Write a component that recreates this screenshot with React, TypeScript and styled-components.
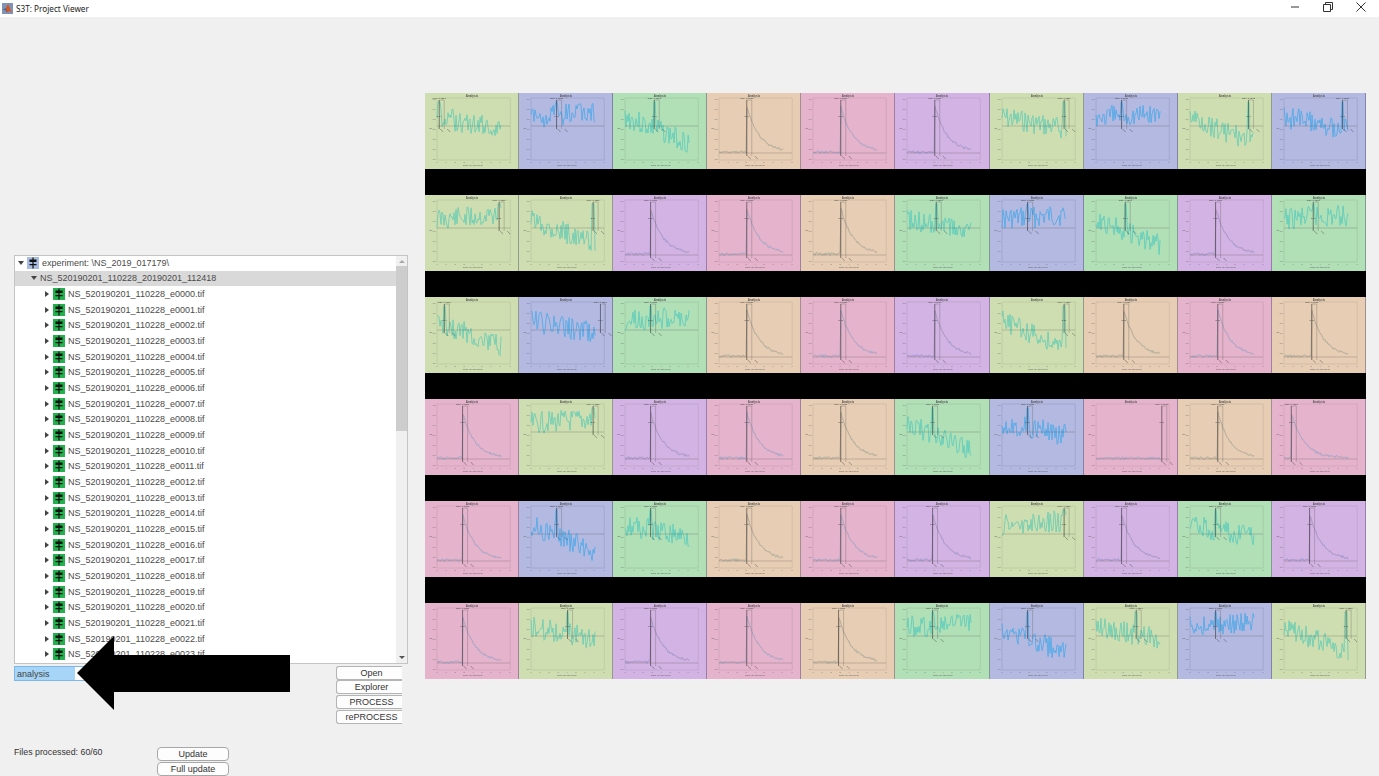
import React from 'react'
import styled, { createGlobalStyle } from 'styled-components'

const GlobalStyle = createGlobalStyle`
  html, body { margin: 0; padding: 0; height: 100%; overflow: hidden; }
  body { font-family: "Liberation Sans", Arial, sans-serif; background: #f0f0f0; }
  #root { height: 100%; }
`

const Window = styled.div`
  position: relative;
  width: 1379px;
  height: 776px;
  display: flex;
  flex-direction: column;
  overflow: hidden;
  background: #f0f0f0;
`
const TitleBar = styled.div`
  height: 17px;
  flex: none;
  background: #fff;
  display: flex;
  align-items: center;
  padding-left: 2px;
`
const TitleText = styled.span`
  margin-left: 3px;
  font: 8.2px "Noto Sans", sans-serif;
  color: #222;
`
const WindowControls = styled.div`
  margin-left: auto;
  display: flex;
  padding-right: 2px;
`
const WindowButton = styled.div`
  width: 33px;
  height: 17px;
  display: flex;
  align-items: center;
  justify-content: center;
  padding-bottom: 3px;
  box-sizing: border-box;
`
const Body = styled.div`
  flex: 1;
  display: flex;
  min-height: 0;
`
const LeftColumn = styled.div`
  width: 425px;
  flex: none;
  box-sizing: border-box;
  padding: 238px 0 0 14px;
  display: flex;
  flex-direction: column;
`
const TreePanel = styled.div`
  width: 394px;
  height: 409px;
  box-sizing: border-box;
  border: 1px solid #c4c4c4;
  background: #fff;
  display: flex;
  overflow: hidden;
`
const TreeRows = styled.div`
  flex: 1;
  min-width: 0;
  overflow: hidden;
  margin-top: -1px;
`
const TreeRow = styled.div<{ $depth: number; $selected?: boolean }>`
  height: 15.66px;
  display: flex;
  align-items: center;
  padding-left: ${p => 2 + p.$depth * 13}px;
  background: ${p => (p.$selected ? '#d9d9d9' : 'transparent')};
  font-size: 9px;
  color: #4a4a4a;
  white-space: nowrap;
`
const Caret = styled.span<{ $open?: boolean }>`
  width: 0;
  height: 0;
  flex: none;
  margin: ${p => (p.$open ? '0 3px 0 1px' : '0 4px 0 2px')};
  border-style: solid;
  ${p =>
    p.$open
      ? 'border-width: 4px 3.5px 0 3.5px; border-color: #444 transparent transparent transparent;'
      : 'border-width: 3.5px 0 3.5px 4px; border-color: transparent transparent transparent #444;'}
`
const RowLabel = styled.span<{ $flush?: boolean }>`
  margin-left: ${p => (p.$flush ? 0 : 3)}px;
`
const ScrollBar = styled.div`
  width: 11px;
  flex: none;
  background: #f0f0f0;
  display: flex;
  flex-direction: column;
  align-items: center;
`
const ScrollArrow = styled.span<{ $down?: boolean }>`
  flex: none;
  margin: ${p => (p.$down ? 'auto 0 4px' : '4px 0 3px')};
  width: 0;
  height: 0;
  border-style: solid;
  border-width: ${p => (p.$down ? '3px 3px 0 3px' : '0 3px 3px 3px')};
  border-color: ${p =>
    p.$down ? '#555 transparent transparent transparent' : 'transparent transparent #a8a8a8 transparent'};
`
const ScrollThumb = styled.div`
  width: 100%;
  height: 165px;
  background: #cdcdcd;
`
const ControlRow = styled.div`
  display: flex;
  justify-content: space-between;
  width: 388px;
  margin-top: 2px;
`
const Combo = styled.div`
  width: 240px;
  height: 15px;
  box-sizing: border-box;
  border: 1px solid #7ab8ea;
  background: #fff;
  display: flex;
`
const ComboValue = styled.div`
  width: 58px;
  background: #a6d5f8;
  font-size: 9px;
  line-height: 14px;
  padding-left: 2px;
  color: #444;
`
const ButtonStack = styled.div`
  display: flex;
  flex-direction: column;
  gap: 0.8px;
`
const ActionButton = styled.div`
  width: 66px;
  height: 14px;
  box-sizing: border-box;
  border: 1px solid #b4b4b4;
  border-right: none;
  border-radius: 3px 0 0 3px;
  background: #fdfdfd;
  font-size: 9px;
  line-height: 13px;
  padding-left: 4px;
  text-align: center;
  color: #333;
`
const StatusRow = styled.div`
  display: flex;
  margin-top: 23px;
`
const StatusText = styled.div`
  width: 143px;
  font-size: 8.8px;
  line-height: 11px;
  color: #333;
`
const UpdateStack = styled.div`
  display: flex;
  flex-direction: column;
  gap: 1px;
`
const UpdateButton = styled.div`
  width: 72px;
  height: 14px;
  box-sizing: border-box;
  border: 1px solid #a8a8a8;
  border-radius: 4px;
  background: #fdfdfd;
  font-size: 9px;
  line-height: 13px;
  text-align: center;
  color: #333;
`
const RightColumn = styled.div`
  flex: none;
  padding-top: 76px;
`
const PlotGrid = styled.div`
  width: 941px;
  height: 586px;
  background: #000;
  display: grid;
  grid-template-columns: repeat(10, 1fr);
  grid-template-rows: repeat(6, 75.5px);
  row-gap: 26.5px;
`
const Tile = styled.div<{ $bg: string }>`
  background: ${p => p.$bg};
  min-width: 0;
  box-shadow: inset -1px 0 0 rgba(60, 50, 90, 0.4);
  svg {
    display: block;
    width: 100%;
    height: 100%;
    filter: blur(0.25px);
  }
`
const ArrowOverlay = styled.svg`
  position: absolute;
  left: 77px;
  top: 636px;
`

type Tint = 'y' | 'b' | 'g' | 't' | 'p' | 'v'

const TINTS: Record<Tint, { bg: string; line: string; box: string }> = {
  y: { bg: '#cfdeb0', line: '#62cbb4', box: '#a3ae8c' },
  b: { bg: '#b3b9e0', line: '#4aa8e8', box: '#8286b0' },
  g: { bg: '#b1dfb6', line: '#58ccbc', box: '#8eae92' },
  t: { bg: '#e6cdb3', line: '#9fb8a8', box: '#b5a38f' },
  p: { bg: '#e5b3cb', line: '#8faee0', box: '#b391a2' },
  v: { bg: '#d3b3e3', line: '#8d9ce6', box: '#a690b2' }
}

const ROWS: { tint: Tint; at: number }[][] = [
  'y.03 b.35 g.4 t.38 p.38 v.38 y.85 b.35 y.8 b.8',
  'y.85 y.85 v.35 p.38 t.38 g.4 b.35 g.4 v.35 g.4',
  'y.1 b.95 g.35 t.38 p.38 v.38 y.85 t.38 p.38 t.38',
  'p.35 y.85 v.35 p.38 t.38 g.35 b.35 p.9 t.38 p.1',
  'p.35 b.35 g.35 t.38 p.38 v.35 y.85 v.35 g.35 v.35',
  'p.35 y.5 v.35 p.38 t.35 g.35 b.35 y.55 b.35 y.85'
].map(row =>
  row.split(' ').map(cell => ({ tint: cell[0] as Tint, at: Number(cell.slice(1)) }))
)

const FILES = Array.from(
  { length: 24 },
  (_, i) => `NS_520190201_110228_e${String(i).padStart(4, '0')}.tif`
)

const Y_TICKS = [7, 17, 27, 37, 47, 57, 67]
const X_TICKS = [12, 21, 30, 39, 48, 57, 66, 75, 85]

const seeded = (seed: number) => {
  let s = seed * 9301 + 49297
  return () => {
    s = (s * 9301 + 49297) % 233280
    return s / 233280
  }
}

const isDecay = (tint: Tint) => tint === 't' || tint === 'p' || tint === 'v'

// data stops around x=76 of the 12..85 plot box, the marker sits on the peak
const tracePoints = (tint: Tint, at: number, seed: number, fit = false) => {
  const rnd = seeded(seed)
  const peak = 12 + at * 73
  const pts: string[] = []
  const drift = seed % 3 === 0 ? 26 : seed % 3 === 1 ? 12 : -4
  for (let i = 0; i <= 64; i++) {
    const x = 12 + i
    const f = i / 64
    let y: number
    if (isDecay(tint)) {
      const d = (x - peak) / 73
      const base = 59 + (fit ? 0 : (rnd() - 0.5) * 3)
      y = d < 0 ? base : base - 46 * Math.exp(-d * 6)
    } else {
      y = 24 + f * drift + (rnd() - 0.5) * 22
      if (Math.abs(x - peak) < 1.2) y = 9
    }
    pts.push(`${x},${y.toFixed(1)}`)
  }
  return pts.join(' ')
}

const Chart = ({ tint, at, seed }: { tint: Tint; at: number; seed: number }) => {
  const colors = TINTS[tint]
  const px = 12 + at * 73
  const baseY = isDecay(tint) ? 60 : 33
  return (
    <svg viewBox="0 0 94 75.5" preserveAspectRatio="none">
      <text x="47" y="3.8" fontSize="3" fontWeight="bold" textAnchor="middle" fill="#555">Analysis</text>
      <rect x="12" y="5" width="73" height="62" fill="none" stroke={colors.box} strokeWidth="0.35" />
      {Y_TICKS.map(y => (
        <text key={y} x="10.5" y={y} fontSize="2" textAnchor="end" fill="#666">0.5</text>
      ))}
      {X_TICKS.map((x, i) => (
        <text key={x} x={x} y="69.6" fontSize="2" textAnchor="middle" fill="#666">{i}</text>
      ))}
      <polyline points={tracePoints(tint, at, seed)} fill="none" stroke={colors.line} strokeWidth="0.8" />
      {isDecay(tint) && (
        <polyline points={tracePoints(tint, at, seed, true)} fill="none" stroke="#d88f80" strokeWidth="0.35" />
      )}
      <line x1="12" x2="85" y1={baseY} y2={baseY} stroke="#444" strokeWidth="0.25" />
      <line x1={px} x2={px} y1="7" y2={baseY + 3} stroke="#222" strokeWidth="0.55" />
      <line x1={px + 5} x2={px + 5} y1="7" y2={baseY + 3} stroke="#555" strokeWidth="0.3" />
      <line x1={px} x2={px + 5} y1="7" y2="7" stroke="#555" strokeWidth="0.3" />
      <line x1={px + 1} x2={px + 4} y1={baseY + 3} y2={baseY + 6} stroke="#333" strokeWidth="0.4" />
      <line x1={px + 8} x2={px + 11} y1={baseY + 3} y2={baseY + 6} stroke="#333" strokeWidth="0.4" />
      <text x={px} y="5.8" fontSize="2.4" textAnchor="middle" fill="#333">max: 0.4517</text>
      <text x={px} y="24" fontSize="2.4" textAnchor="middle" fill="#222">0.44</text>
      <text x="48" y="73" fontSize="2.4" textAnchor="middle" fill="#555">Time (s) (30.00Hz)</text>
      <text x="6" y="36" fontSize="2.4" textAnchor="middle" fill="#555">dF</text>
    </svg>
  )
}

const NodeIcon = ({ bg }: { bg: string }) => (
  <svg width="12" height="12" viewBox="0 0 12 12" style={{ flex: 'none' }}>
    <rect width="12" height="12" fill={bg} />
    <path d="M5.4 0.5H6.6V11.5H5.4ZM2.5 2.5H9.5V5H2.5ZM2.5 7H9.5V8.2H2.5Z" fill="#111" />
  </svg>
)

const MatlabIcon = () => (
  <svg width="11" height="11" viewBox="0 0 11 11">
    <rect width="11" height="11" fill="#7f93b5" />
    <path d="M0.5 7L4 5L6 1L9 8L10.5 9.5L7 8L5 9.5L3 7Z" fill="#d9531e" />
    <path d="M0.5 7L4 5L5 9.5L3 7Z" fill="#3a6ea8" />
  </svg>
)

const App = () => (
  <Window>
    <GlobalStyle />
    <TitleBar>
      <MatlabIcon />
      <TitleText>S3T: Project Viewer</TitleText>
      <WindowControls>
        <WindowButton>
          <svg width="10" height="10" viewBox="0 0 10 10"><path d="M1 5H9" stroke="#333" /></svg>
        </WindowButton>
        <WindowButton>
          <svg width="10" height="10" viewBox="0 0 10 10" fill="none" stroke="#333">
            <path d="M.5 2.5H7.5V9.5H.5ZM2.5 2.5V.5H9.5V7.5H7.5" />
          </svg>
        </WindowButton>
        <WindowButton>
          <svg width="10" height="10" viewBox="0 0 10 10"><path d="M.5 .5L9.5 9.5M9.5 .5L.5 9.5" stroke="#333" /></svg>
        </WindowButton>
      </WindowControls>
    </TitleBar>
    <Body>
      <LeftColumn>
        <TreePanel>
          <TreeRows>
            <TreeRow $depth={0}>
              <Caret $open />
              <NodeIcon bg="#a9bde0" />
              <RowLabel>experiment: \NS_2019_017179\</RowLabel>
            </TreeRow>
            <TreeRow $depth={1} $selected>
              <Caret $open />
              <RowLabel $flush>NS_520190201_110228_20190201_112418</RowLabel>
            </TreeRow>
            {FILES.map(name => (
              <TreeRow key={name} $depth={2}>
                <Caret />
                <NodeIcon bg="#22b14c" />
                <RowLabel>{name}</RowLabel>
              </TreeRow>
            ))}
          </TreeRows>
          <ScrollBar>
            <ScrollArrow />
            <ScrollThumb />
            <ScrollArrow $down />
          </ScrollBar>
        </TreePanel>
        <ControlRow>
          <Combo>
            <ComboValue>analysis</ComboValue>
          </Combo>
          <ButtonStack>
            <ActionButton>Open</ActionButton>
            <ActionButton>Explorer</ActionButton>
            <ActionButton>PROCESS</ActionButton>
            <ActionButton>rePROCESS</ActionButton>
          </ButtonStack>
        </ControlRow>
        <StatusRow>
          <StatusText>Files processed: 60/60</StatusText>
          <UpdateStack>
            <UpdateButton>Update</UpdateButton>
            <UpdateButton>Full update</UpdateButton>
          </UpdateStack>
        </StatusRow>
      </LeftColumn>
      <RightColumn>
        <PlotGrid>
          {ROWS.flatMap((row, r) =>
            row.map((cell, c) => (
              <Tile key={`${r}-${c}`} $bg={TINTS[cell.tint].bg}>
                <Chart tint={cell.tint} at={cell.at} seed={r * 10 + c + 1} />
              </Tile>
            ))
          )}
        </PlotGrid>
      </RightColumn>
    </Body>
    <ArrowOverlay width="213" height="74" viewBox="0 0 213 74">
      <path d="M0 37L37 0V19H213V56H37V74Z" fill="#000" />
    </ArrowOverlay>
  </Window>
)

export default App
